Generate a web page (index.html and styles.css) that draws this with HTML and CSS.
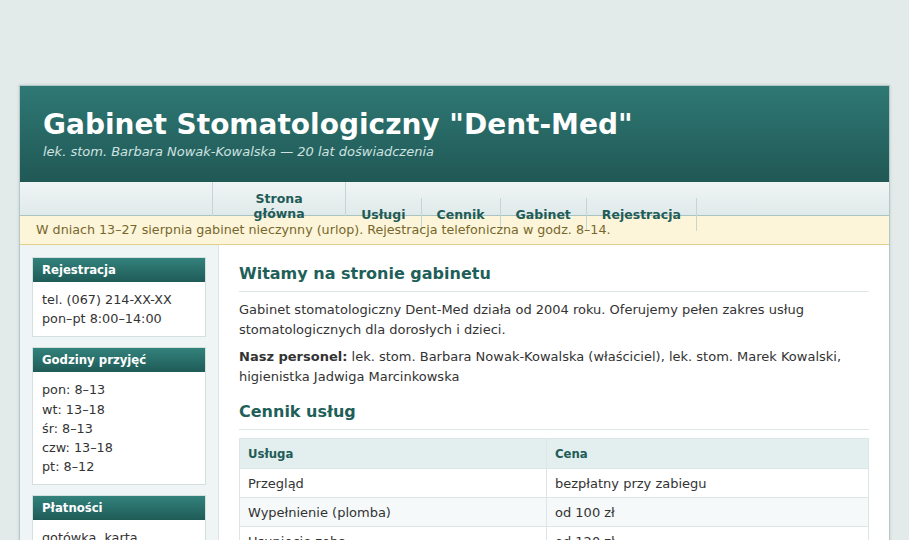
FILE: index.html
```html
<!doctype html>
<html lang="pl">
<head>
<meta charset="UTF-8">
<title>Gabinet Stomatologiczny "Dent-Med"</title>
<link rel="stylesheet" href="styles.css">
</head>
<body>
<div class="wrap">
	<div class="header">
		<h1>Gabinet Stomatologiczny "Dent-Med"</h1>
		<p class="sub">lek. stom. Barbara Nowak-Kowalska — 20 lat doświadczenia</p>
	</div>
	<ul class="menu">
		<li class="first"><a href="#">Strona<br>główna</a></li>
		<li><a href="#">Usługi</a></li>
		<li><a href="#">Cennik</a></li>
		<li><a href="#">Gabinet</a></li>
		<li><a href="#">Rejestracja</a></li>
	</ul>
	<div class="notice">W dniach 13–27 sierpnia gabinet nieczynny (urlop). Rejestracja telefoniczna w godz. 8–14.</div>
	<div class="cols">
		<div class="side">
			<div class="box">
				<h3>Rejestracja</h3>
				<div class="box_body">
					tel. (067) 214-XX-XX<br>
					pon–pt 8:00–14:00
				</div>
			</div>
			<div class="box">
				<h3>Godziny przyjęć</h3>
				<div class="box_body">
					pon: 8–13<br>
					wt: 13–18<br>
					śr: 8–13<br>
					czw: 13–18<br>
					pt: 8–12
				</div>
			</div>
			<div class="box">
				<h3>Płatności</h3>
				<div class="box_body">
					gotówka, karta<br>
					NFZ – wybrane zabiegi
				</div>
			</div>
		</div>
		<div class="main">
			<h2>Witamy na stronie gabinetu</h2>
			<p>Gabinet stomatologiczny Dent-Med działa od 2004 roku. Oferujemy pełen zakres usług stomatologicznych dla dorosłych i dzieci.</p>
			<p><b>Nasz personel:</b> lek. stom. Barbara Nowak-Kowalska (właściciel), lek. stom. Marek Kowalski, higienistka Jadwiga Marcinkowska</p>
			<h2>Cennik usług</h2>
			<table class="price">
				<tr><th>Usługa</th><th>Cena</th></tr>
				<tr><td>Przegląd</td><td>bezpłatny przy zabiegu</td></tr>
				<tr><td>Wypełnienie (plomba)</td><td>od 100 zł</td></tr>
				<tr><td>Usunięcie zęba</td><td>od 120 zł</td></tr>
				<tr><td>Leczenie kanałowe</td><td>od 400 zł</td></tr>
			</table>
		</div>
	</div>
</div>
</body>
</html>
```

FILE: styles.css
```css
body{
	margin:0;
	padding:85px 0 0;
	background:#e2eaea;
	font-family:"DejaVu Sans",Verdana,sans-serif;
	font-size:13px;
	color:#333;
}
.wrap{
	width:869px;
	margin:0 auto;
	background:#fff;
	border:1px solid #b4c8c8;
	box-shadow:0 0 3px rgba(0,0,0,.12);
}
.header{
	height:96px;
	padding:0 23px;
	box-sizing:border-box;
	background:linear-gradient(#2e7874,#205855);
	color:#fff;
}
.header h1{
	margin:0;
	padding-top:22px;
	font-size:28px;
	line-height:34px;
}
.header .sub{
	margin:2px 0 0;
	font-style:italic;
	font-size:13px;
	color:#cfe2e0;
}
/* menu: pozycje wyśrodkowane, "Strona główna" w dwóch liniach */
.menu{
	list-style:none;
	margin:0;
	padding:0;
	height:33px;
	display:flex;
	justify-content:center;
	align-items:flex-start;
	background:linear-gradient(#f0f5f4,#e0eaea);
	border-bottom:1px solid #a9c3c3;
}
.menu li{
	border-right:1px solid #c3d5d5;
	margin-top:16px;
}
.menu li.first{
	border-left:1px solid #c3d5d5;
	margin-top:0;
	height:34px;
}
.menu a{
	display:block;
	padding:9px 15px;
	line-height:15px;
	font-size:12.5px;
	font-weight:bold;
	color:#1f5c58;
	text-decoration:none;
	text-align:center;
}
.menu .first a{width:102px}
.notice{
	background:#fdf5d9;
	border-bottom:1px solid #e2cf8c;
	color:#76672c;
	padding:6px 16px;
	font-size:12.7px;
	line-height:16px;
}
.cols{display:flex}
.side{
	width:174px;
	flex:none;
	padding:12px 12px 0 12px;
	background:#eff5f5;
	border-right:1px solid #dbe6e5;
}
.box{
	border:1px solid #d3e0df;
	background:#fff;
	margin-bottom:10px;
}
.box h3{
	margin:0;
	height:24px;
	line-height:24px;
	padding:0 9px;
	font-size:11.7px;
	color:#fff;
	background:linear-gradient(#33827c,#1f5b57);
}
.box_body{
	padding:8px 9px;
	font-size:12.8px;
	line-height:19.2px;
}
.main{
	flex:1;
	padding:17px 20px 20px;
}
.main h2{
	margin:0 0 8px;
	padding-bottom:5px;
	font-size:16px;
	line-height:24px;
	color:#1f5f5a;
	border-bottom:1px solid #dce7e6;
}
.main p{
	margin:0 0 8px;
	line-height:19.5px;
}
.main p + h2{margin-top:14px}
.price{
	width:100%;
	border-collapse:collapse;
}
.price th,.price td{
	border:1px solid #dbe6e5;
	padding:0 8px;
	height:28px;
	text-align:left;
}
.price th{
	background:#e3eeee;
	color:#1f5c58;
	font-size:11.7px;
	height:29px;
}
.price tr:nth-child(odd) td{background:#f5f9f9}
.price td:first-child,.price th:first-child{width:290px}
```
